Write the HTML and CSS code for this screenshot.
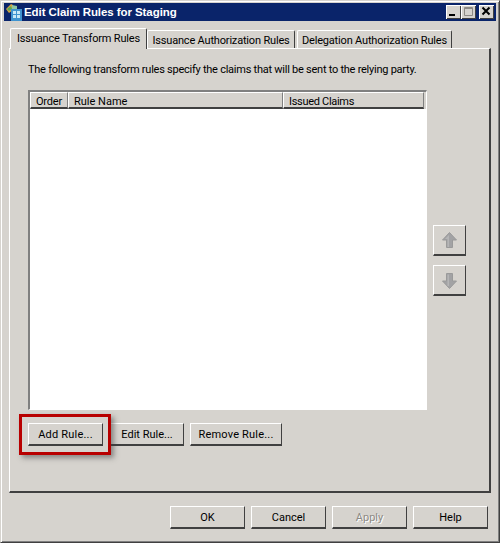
FILE: index.html
```html
<!DOCTYPE html>
<html lang="en">
<head>
    <meta charset="UTF-8">
    <meta name="viewport" content="width=device-width, initial-scale=1.0">
    <title>Edit Claim Rules for Staging</title>
    <link rel="stylesheet" href="styles.css">
</head>
<body>
    <div class="window">
        <!-- Title bar -->
        <div class="titlebar">
            <svg class="title-icon" width="17" height="17" viewBox="0 0 17 17">
                <path d="M0 5 L5 0 L7 1 L7 6 L3 9 Z" fill="#d9a441"/>
                <path d="M1 5 L5 2 L6 5 L3 7 Z" fill="#58a85a"/>
                <path d="M6 1 L11 2 L11 5 L6 5 Z" fill="#8cc5a0"/>
                <rect x="5" y="5" width="11" height="12" fill="#3f93cf"/>
                <rect x="7" y="7" width="3" height="3" fill="#c9e8f6"/>
                <rect x="11" y="7" width="3" height="3" fill="#c9e8f6"/>
                <rect x="7" y="11" width="3" height="3" fill="#c9e8f6"/>
                <rect x="11" y="11" width="3" height="3" fill="#c9e8f6"/>
            </svg>
            <span class="title-text">Edit Claim Rules for Staging</span>
            <div class="title-buttons">
                <div class="cap-btn"><svg width="15" height="14" viewBox="0 0 15 14"><rect x="3" y="9" width="6" height="2" fill="#000"/></svg></div>
                <div class="cap-btn"><svg width="15" height="14" viewBox="0 0 15 14"><path d="M3.5 2.5 H11.5 V10.5 H3.5 Z M3 3.5 H12" fill="none" stroke="#8d8a85"/></svg></div>
                <div class="cap-btn close"><svg width="15" height="14" viewBox="0 0 15 14"><path d="M3.5 2.5 L10.5 9.5 M10.5 2.5 L3.5 9.5" stroke="#000" stroke-width="2" fill="none"/></svg></div>
            </div>
        </div>

        <!-- Tabs -->
        <div class="tabs">
            <div class="tab active">Issuance Transform Rules</div>
            <div class="tab tab-second">Issuance Authorization Rules</div>
            <div class="tab tab-third">Delegation Authorization Rules</div>
        </div>

        <div class="panel">
            <p class="intro">The following transform rules specify the claims that will be sent to the relying party.</p>

            <div class="list-row">
                <div class="rules-list">
                    <div class="list-header">
                        <div class="col col-order">Order</div>
                        <div class="col col-name">Rule Name</div>
                        <div class="col col-claims">Issued Claims</div>
                    </div>
                </div>
                <div class="move-buttons">
                    <div class="btn move-btn">
                        <svg width="15" height="17" viewBox="0 0 15 17"><path d="M7.5 0.5 L14.5 8 H10.5 V15.5 H4.5 V8 H0.5 Z" fill="#a2a2a4" stroke="#9a9a9a"/><path d="M7 3 V15 H5.5 V7 H3 Z" fill="#b5b5b6"/></svg>
                    </div>
                    <div class="btn move-btn">
                        <svg width="15" height="17" viewBox="0 0 15 17"><path d="M7.5 16.5 L14.5 9 H10.5 V1.5 H4.5 V9 H0.5 Z" fill="#a2a2a4" stroke="#9a9a9a"/><path d="M7 2.5 V14 H5.5 V2.5 Z" fill="#b5b5b6"/></svg>
                    </div>
                </div>
            </div>

            <div class="rule-buttons">
                <div class="highlighted">
                    <div class="btn rule-add">Add Rule...</div>
                    <div class="red-box"></div>
                </div>
                <div class="btn rule-edit">Edit Rule...</div>
                <div class="btn rule-remove">Remove Rule...</div>
            </div>
        </div>

        <!-- Bottom buttons -->
        <div class="footer">
            <div class="btn footer-btn">OK</div>
            <div class="btn footer-btn">Cancel</div>
            <div class="btn footer-btn disabled">Apply</div>
            <div class="btn footer-btn">Help</div>
        </div>
    </div>
</body>
</html>
```

FILE: styles.css
```css
* {
    box-sizing: border-box;
}

html, body {
    margin: 0;
    padding: 0;
}

body {
    width: 500px;
    height: 543px;
    overflow: hidden;
    font-family: Roboto, "Liberation Sans", Arial, sans-serif;
    font-size: 11px;
    color: #000;
    background-color: #d6d3ce;
}

/* Window frame */
.window {
    width: 500px;
    height: 543px;
    padding: 3px 3px 0;
    background-color: #d6d3ce;
    border-top: 1px solid #d6d3ce;
    border-left: 1px solid #d6d3ce;
    border-right: 1px solid #404040;
    border-bottom: 1px solid #404040;
    box-shadow: inset 1px 1px 0 #fff, inset -1px -1px 0 #808080;
}

.titlebar {
    display: flex;
    align-items: center;
    height: 18px;
    margin: -1px 0 0;
    padding: 0 2px 0 2px;
    background-color: #0a246a;
    color: #fff;
}

.title-icon {
    flex: none;
    margin-right: 1px;
}

.title-text {
    flex: 1;
    font-family: "Liberation Sans", Arial, sans-serif;
    font-size: 11.5px;
    font-weight: bold;
    letter-spacing: -0.07px;
}

.title-buttons {
    display: flex;
}

.cap-btn {
    width: 15px;
    height: 14px;
    background-color: #d6d3ce;
    box-shadow: inset 1px 1px 0 #fff, inset -1px -1px 0 #404040;
}

.close {
    margin-left: 3px;
}

/* Tabs */
.tabs {
    display: flex;
    align-items: flex-end;
    height: 27px;
    padding-left: 6px;
}

.tab {
    height: 18px;
    padding-top: 3px;
    text-align: center;
    white-space: nowrap;
    letter-spacing: -0.18px;
    border-top: 1px solid #fff;
    border-left: 1px solid #fff;
    border-right: 1px solid #404040;
    border-radius: 2px 2px 0 0;
}

.active {
    position: relative;
    z-index: 1;
    width: 137px;
    height: 21px;
    margin-bottom: -1px;
    background-color: #d6d3ce;
}

.tab-second {
    width: 148px;
}

.tab-third {
    width: 155px;
    margin-left: 2px;
}

.panel {
    width: 482px;
    height: 445px;
    margin-left: 5px;
    padding: 8px 18px 0;
    border-top: 1px solid #fff;
    border-left: 1px solid #fff;
    border-right: 2px solid #404040;
    border-bottom: 2px solid #404040;
}

.intro {
    margin: 6px 0 0 0;
    height: 27px;
    white-space: nowrap;
    letter-spacing: -0.25px;
}

.list-row {
    display: flex;
}

.rules-list {
    width: 399px;
    height: 320px;
    background-color: #fff;
    border-top: 2px solid #808080;
    border-left: 2px solid #808080;
    border-right: 1px solid #fff;
    border-bottom: 1px solid #fff;
}

.list-header {
    display: flex;
    height: 17px;
    padding-right: 2px;
    background-color: #d6d3ce;
}

.col {
    padding: 1px 0 0 5px;
    line-height: 15px;
    border-top: 1px solid #fff;
    border-left: 1px solid #fff;
    border-right: 1px solid #808080;
    border-bottom: 2px solid #404040;
}

.col-order {
    width: 38px;
    letter-spacing: -0.2px;
}

.col-name {
    width: 215px;
}

.col-claims {
    flex: 1;
    letter-spacing: -0.3px;
}

.move-buttons {
    display: flex;
    flex-direction: column;
    gap: 9px;
    margin: 135px 0 0 6px;
}

/* Buttons */
.btn {
    display: flex;
    align-items: center;
    justify-content: center;
    height: 23px;
    background-color: #d6d3ce;
    border-top: 1px solid #fff;
    border-left: 1px solid #fff;
    border-right: 1px solid #404040;
    border-bottom: 2px solid #404040;
}

.move-btn {
    width: 33px;
    height: 31px;
}

.rule-buttons {
    display: flex;
    margin-top: 13px;
}

.highlighted {
    position: relative;
}

.rule-add {
    width: 75px;
    letter-spacing: 0.2px;
}

.rule-edit {
    width: 74px;
    margin-left: 7px;
}

.rule-remove {
    width: 92px;
    margin-left: 6px;
    letter-spacing: 0.2px;
}

/* Red marker drawn over the screenshot */
.red-box {
    position: absolute;
    left: -9px;
    top: -9px;
    width: 92px;
    height: 41px;
    border: 3px solid #b80000;
    box-shadow: 3px 3px 5px rgba(60, 60, 60, 0.5);
}

.footer {
    display: flex;
    justify-content: flex-end;
    gap: 6px;
    margin-top: 13px;
    padding-right: 8px;
}

.footer-btn {
    width: 75px;
}

.disabled {
    color: #8d8a85;
    text-shadow: 1px 1px 0 #fff;
}
```
